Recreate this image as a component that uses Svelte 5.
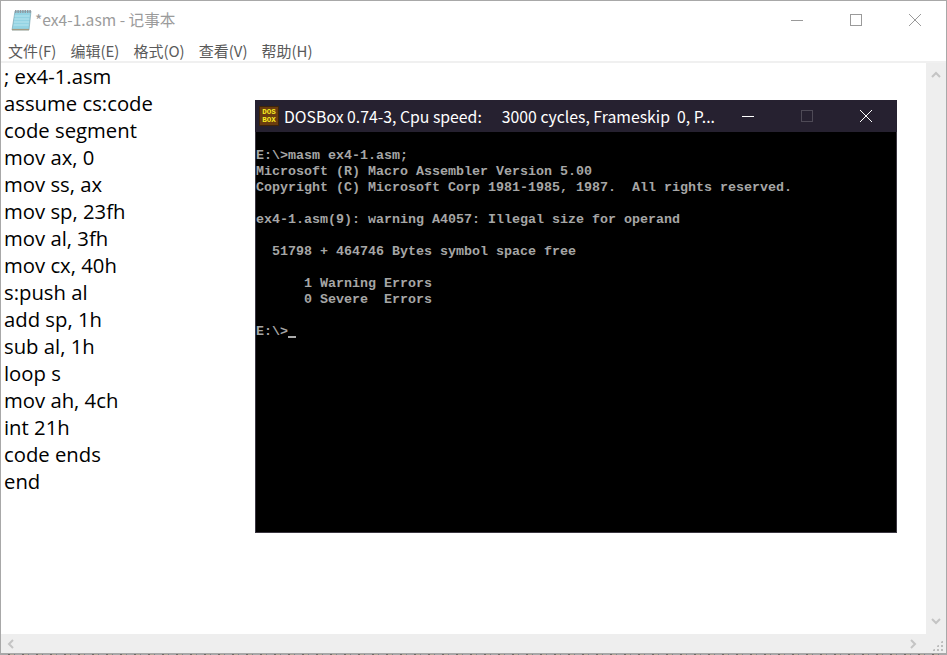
<script>
  const menus = ['文件(F)', '编辑(E)', '格式(O)', '查看(V)', '帮助(H)']

  const source = [
    '; ex4-1.asm', 'assume cs:code', 'code segment', 'mov ax, 0', 'mov ss, ax', 'mov sp, 23fh',
    'mov al, 3fh', 'mov cx, 40h', 's:push al', 'add sp, 1h', 'sub al, 1h', 'loop s',
    'mov ah, 4ch', 'int 21h', 'code ends', 'end'
  ]

  const terminal = `
E:\\>masm ex4-1.asm;
Microsoft (R) Macro Assembler Version 5.00
Copyright (C) Microsoft Corp 1981-1985, 1987.  All rights reserved.

ex4-1.asm(9): warning A4057: Illegal size for operand

  51798 + 464746 Bytes symbol space free

      1 Warning Errors
      0 Severe  Errors

E:\\>`
</script>

<div class="notepad">
  <header class="titlebar">
    <svg class="app-icon" width="21" height="22" viewBox="0 0 21 22">
      <path d="M4 2 L20 2 L18 21 L1 21 Z" fill="#93d3e3" stroke="#6f9aa8" stroke-width="0.6" />
      <path d="M3.6 7 H18.6 M3.3 10 H18.3 M3 13 H18 M2.6 16 H17.6" stroke="#b9e5ee" />
      <path d="M1 20.6 H18" stroke="#a49a80" stroke-width="1.4" />
      <path d="M4 2.5 H20" stroke="#8f99a0" stroke-width="3" stroke-dasharray="1.4 1" />
    </svg>
    <span class="title">*ex4-1.asm - 记事本</span>
    <div class="win-buttons">
      <svg width="14" height="14" viewBox="0 0 14 14"><path d="M1 7.5 H13" stroke="#9a9a9a" /></svg>
      <svg width="14" height="14" viewBox="0 0 14 14"><rect x="1.5" y="1.5" width="11" height="11" fill="none" stroke="#9a9a9a" /></svg>
      <svg width="14" height="14" viewBox="0 0 14 14"><path d="M1 1 L13 13 M13 1 L1 13" stroke="#9a9a9a" /></svg>
    </div>
  </header>

  <nav class="menubar">
    {#each menus as item}
      <span>{item}</span>
    {/each}
  </nav>

  <div class="body">
    <div class="editor">
      {#each source as line}
        <div class="line">{line}</div>
      {/each}
    </div>
    <div class="vscroll">
      <svg width="10" height="7" viewBox="0 0 10 7"><path d="M1 6 L5 2 L9 6" fill="none" stroke="#c4c4c4" stroke-width="2" /></svg>
      <svg width="10" height="7" viewBox="0 0 10 7"><path d="M1 1 L5 5 L9 1" fill="none" stroke="#c4c4c4" stroke-width="2" /></svg>
    </div>
  </div>

  <div class="hscroll">
    <svg width="7" height="10" viewBox="0 0 7 10"><path d="M6 1 L2 5 L6 9" fill="none" stroke="#c4c4c4" stroke-width="2" /></svg>
    <svg width="7" height="10" viewBox="0 0 7 10"><path d="M1 1 L5 5 L1 9" fill="none" stroke="#c4c4c4" stroke-width="2" /></svg>
    <div class="grip"></div>
  </div>
  <div class="desktop-edge"></div>

  <section class="dosbox">
    <header class="dos-title">
      <div class="dos-icon"><span>DOS</span><span>BOX</span></div>
      <span class="dos-name">DOSBox 0.74-3, Cpu speed:</span>
      <span class="dos-name cycles">3000 cycles, Frameskip &nbsp;0, P...</span>
      <div class="dos-buttons">
        <svg width="14" height="14" viewBox="0 0 14 14"><path d="M1 7.5 H13" stroke="#ffffff" /></svg>
        <svg width="14" height="14" viewBox="0 0 14 14"><rect x="1.5" y="1.5" width="11" height="11" fill="none" stroke="#4e4a56" /></svg>
        <svg width="14" height="14" viewBox="0 0 14 14"><path d="M1 1 L13 13 M13 1 L1 13" stroke="#ffffff" /></svg>
      </div>
    </header>
    <pre class="screen">{terminal}<span class="cursor"></span></pre>
  </section>
</div>

<style>
  :global(body) {
    margin: 0;
    background: #ffffff;
  }

  .notepad {
    position: relative;
    width: 947px;
    height: 655px;
    box-sizing: border-box;
    display: flex;
    flex-direction: column;
    overflow: hidden;
    background: #ffffff;
    border-top: 1px solid #a8a8a8;
    border-left: 1px solid #a8a8a8;
    border-right: 1px solid #a8a8a8;
    font-family: "Noto Sans CJK SC", "Noto Sans", sans-serif;
  }

  .titlebar {
    height: 38px;
    display: flex;
    align-items: center;
    padding-left: 10px;
    flex: none;
  }

  .app-icon {
    margin-right: 3px;
  }

  .title {
    font-size: 15.6px;
    color: #9b9b9b;
    position: relative;
    top: -1px;
  }

  .win-buttons {
    margin-left: auto;
    display: flex;
    gap: 45px;
    padding-right: 24px;
    padding-bottom: 1px;
  }

  .menubar {
    height: 22px;
    display: flex;
    align-items: center;
    gap: 14px;
    padding-left: 7px;
    font-size: 15px;
    color: #5a5a5a;
    flex: none;
    border-bottom: 2px solid #f0f0f0;
  }

  .body {
    flex: 1;
    min-height: 0;
    display: flex;
  }

  .editor {
    flex: 1;
    padding: 0 0 0 3px;
    font-family: "Open Sans", "Noto Sans", sans-serif;
    font-size: 20.3px;
    line-height: 27px;
    color: #000000;
  }

  .line {
    height: 27px;
    white-space: pre;
  }

  .vscroll {
    width: 20px;
    background: #eeeeee;
    display: flex;
    flex-direction: column;
    justify-content: space-between;
    align-items: center;
    padding: 8px 0 9px;
    box-sizing: border-box;
  }

  .hscroll {
    position: relative;
    height: 19px;
    flex: none;
    background: #eeeeee;
    display: flex;
    align-items: center;
    justify-content: space-between;
    padding: 0 29px 0 6px;
    border-bottom: 1px solid #a8a8a8;
  }

  .desktop-edge {
    height: 1px;
    flex: none;
    background: repeating-linear-gradient(90deg, #a8a8a8 0 7px, #6d6a66 7px 9px, #b0a898 9px 13px, #7c7f88 13px 14px);
  }

  .grip {
    position: absolute;
    right: 3px;
    bottom: 2px;
    width: 11px;
    height: 11px;
    background: radial-gradient(circle, #bdbdbd 1.2px, transparent 1.5px) 0 0 / 4px 4px;
    clip-path: polygon(100% 0, 100% 100%, 0 100%);
  }

  .dosbox {
    position: absolute;
    left: 254px;
    top: 99px;
    width: 642px;
    height: 433px;
    background: #000000;
    box-shadow: inset 1px 0 #3a3640, inset -1px 0 #3a3640, inset 0 -1px #3a3640;
    display: flex;
    flex-direction: column;
  }

  .dos-title {
    height: 32px;
    flex: none;
    background: #262130;
    display: flex;
    align-items: center;
    padding-left: 4px;
    color: #ffffff;
  }

  .dos-icon {
    width: 20px;
    height: 20px;
    margin-right: 5px;
    background: #6a3c10;
    border: 1px solid #3e2408;
    box-sizing: border-box;
    display: flex;
    flex-direction: column;
    align-items: center;
    justify-content: center;
    font-family: "Liberation Mono", monospace;
    font-size: 7.5px;
    font-weight: bold;
    line-height: 8px;
    color: #f8ec20;
  }

  .dos-name {
    font-family: "Noto Sans CJK SC", "Noto Sans", sans-serif;
    font-size: 15.8px;
    white-space: nowrap;
  }

  .cycles {
    margin-left: 20px;
  }

  .dos-buttons {
    margin-left: auto;
    display: flex;
    gap: 45px;
    padding-right: 24px;
  }

  .screen {
    margin: 0;
    padding-left: 1px;
    font-family: "Liberation Mono", monospace;
    font-size: 13.33px;
    font-weight: bold;
    line-height: 16px;
    color: #a6a6a6;
    overflow: hidden;
  }

  .cursor {
    display: inline-block;
    width: 8px;
    height: 2px;
    background: #aaaaaa;
    vertical-align: -3px;
  }
</style>
